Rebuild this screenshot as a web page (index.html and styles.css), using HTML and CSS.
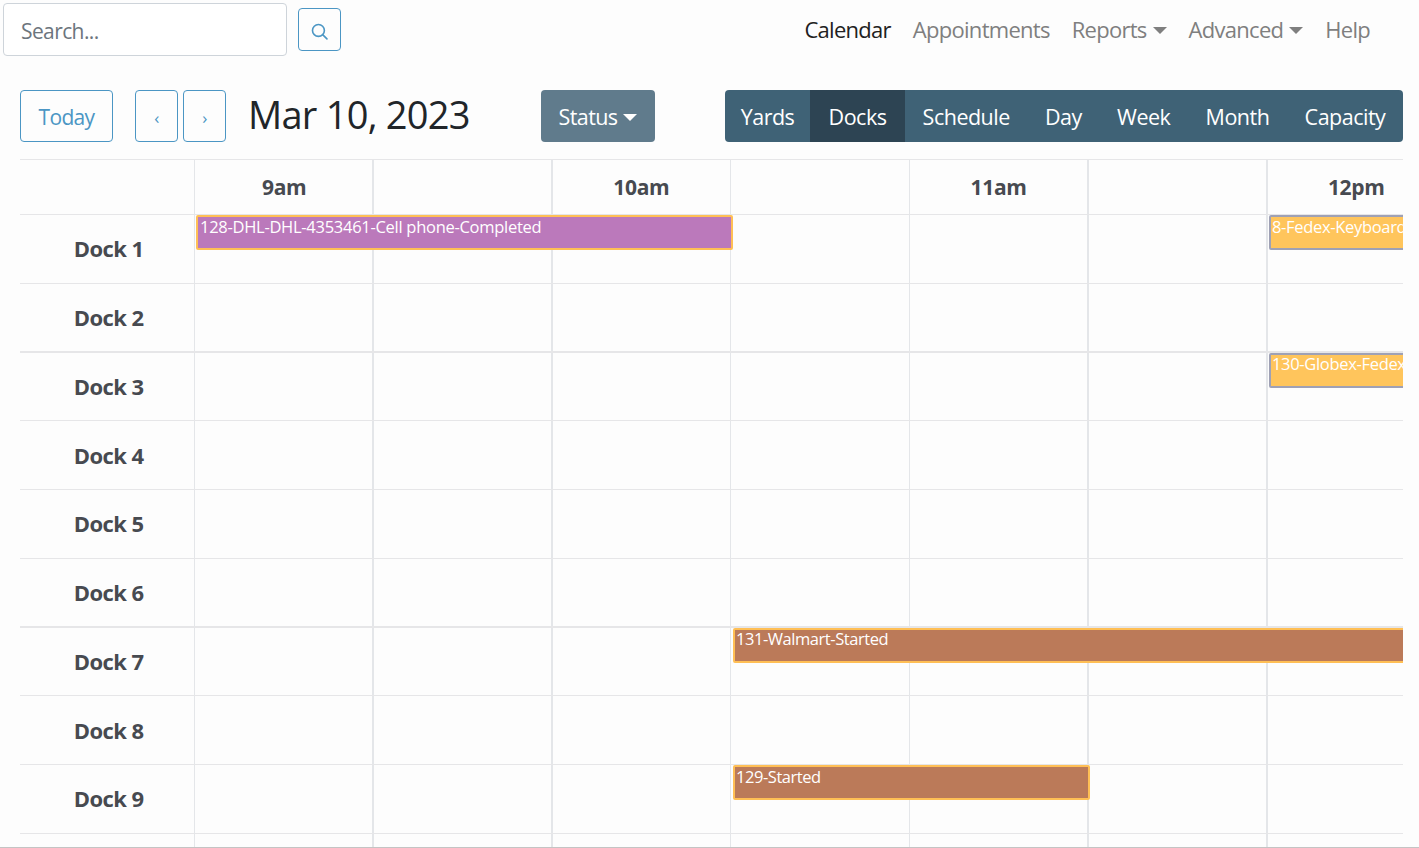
FILE: index.html
```html
<!DOCTYPE html>
<html lang="en">
<head>
<meta charset="utf-8">
<title>Calendar</title>
<link rel="stylesheet" href="styles.css">
</head>
<body>
<div class="page">
  <header class="topbar">
    <input class="search-input" type="text" placeholder="Search...">
    <button class="search-btn" type="button" aria-label="Search">
      <svg width="17" height="17" viewBox="0 0 16 16" fill="none" stroke="#4b96c4" stroke-width="1.5"><circle cx="7" cy="7" r="5.6"/><path d="M11.2 11.2l3.8 3.8" stroke-linecap="round"/></svg>
    </button>
    <nav class="nav">
      <a class="nav-link active">Calendar</a>
      <a class="nav-link">Appointments</a>
      <a class="nav-link caret-link">Reports</a>
      <a class="nav-link caret-link">Advanced</a>
      <a class="nav-link">Help</a>
    </nav>
  </header>

  <section class="toolbar">
    <button class="btn-outline today" type="button">Today</button>
    <div class="pager">
      <button class="btn-outline arrow" type="button">‹</button>
      <button class="btn-outline arrow" type="button">›</button>
    </div>
    <h2 class="title">Mar 10, 2023</h2>
    <button class="status caret-link" type="button">Status</button>
    <div class="views">
      <button class="view v-yards" type="button">Yards</button>
      <button class="view v-docks current" type="button">Docks</button>
      <button class="view" type="button">Schedule</button>
      <button class="view" type="button">Day</button>
      <button class="view" type="button">Week</button>
      <button class="view" type="button">Month</button>
      <button class="view" type="button">Capacity</button>
    </div>
  </section>

  <section class="calendar">
    <div class="row head">
      <div class="label"></div>
      <div class="cell hour">9am</div><div class="cell thick"></div>
      <div class="cell thick hour">10am</div><div class="cell"></div>
      <div class="cell hour">11am</div><div class="cell thick"></div>
      <div class="cell thick hour">12pm</div>
    </div>
    <div class="row">
      <div class="label">Dock 1</div>
      <div class="cell"></div><div class="cell thick"></div><div class="cell thick"></div><div class="cell"></div><div class="cell"></div><div class="cell thick"></div><div class="cell thick"></div>
      <div class="event purple" style="left:176px;width:537px">128-DHL-DHL-4353461-Cell phone-Completed</div>
      <div class="event amber" style="left:1249px;width:300px">8-Fedex-Keyboard</div>
    </div>
    <div class="row">
      <div class="label">Dock 2</div>
      <div class="cell"></div><div class="cell thick"></div><div class="cell thick"></div><div class="cell"></div><div class="cell"></div><div class="cell thick"></div><div class="cell thick"></div>
    </div>
    <div class="row heavy">
      <div class="label">Dock 3</div>
      <div class="cell"></div><div class="cell thick"></div><div class="cell thick"></div><div class="cell"></div><div class="cell"></div><div class="cell thick"></div><div class="cell thick"></div>
      <div class="event amber" style="left:1249px;width:300px">130-Globex-Fedex</div>
    </div>
    <div class="row">
      <div class="label">Dock 4</div>
      <div class="cell"></div><div class="cell thick"></div><div class="cell thick"></div><div class="cell"></div><div class="cell"></div><div class="cell thick"></div><div class="cell thick"></div>
    </div>
    <div class="row">
      <div class="label">Dock 5</div>
      <div class="cell"></div><div class="cell thick"></div><div class="cell thick"></div><div class="cell"></div><div class="cell"></div><div class="cell thick"></div><div class="cell thick"></div>
    </div>
    <div class="row">
      <div class="label">Dock 6</div>
      <div class="cell"></div><div class="cell thick"></div><div class="cell thick"></div><div class="cell"></div><div class="cell"></div><div class="cell thick"></div><div class="cell thick"></div>
    </div>
    <div class="row heavy">
      <div class="label">Dock 7</div>
      <div class="cell"></div><div class="cell thick"></div><div class="cell thick"></div><div class="cell"></div><div class="cell"></div><div class="cell thick"></div><div class="cell thick"></div>
      <div class="event brown" style="left:713px;width:800px">131-Walmart-Started</div>
    </div>
    <div class="row">
      <div class="label">Dock 8</div>
      <div class="cell"></div><div class="cell thick"></div><div class="cell thick"></div><div class="cell"></div><div class="cell"></div><div class="cell thick"></div><div class="cell thick"></div>
    </div>
    <div class="row">
      <div class="label">Dock 9</div>
      <div class="cell"></div><div class="cell thick"></div><div class="cell thick"></div><div class="cell"></div><div class="cell"></div><div class="cell thick"></div><div class="cell thick"></div>
      <div class="event brown" style="left:713px;width:357px">129-Started</div>
    </div>
    <div class="row">
      <div class="label"></div>
      <div class="cell"></div><div class="cell thick"></div><div class="cell thick"></div><div class="cell"></div><div class="cell"></div><div class="cell thick"></div><div class="cell thick"></div>
    </div>
  </section>
</div>
</body>
</html>
```
FILE: styles.css
```css
* { box-sizing: border-box; }
html, body { margin: 0; padding: 0; height: 100%; overflow: hidden; }
body {
  background: #fdfdfd;
  font-family: "Open Sans", "Noto Sans", sans-serif;
  color: #212529;
}
button { font-family: inherit; cursor: pointer; }
.page {
  height: 848px;
  overflow: hidden;
  border-bottom: 1px solid #c4c4c4;
}
.topbar {
  display: flex;
  align-items: flex-start;
  height: 90px;
  padding: 3px 49px 0 3px;
}
.search-input {
  width: 284px;
  height: 53px;
  padding: 2px 17px 0;
  border: 1px solid #ced4da;
  border-radius: 4px;
  background: #fff;
  font: 21px "Open Sans", sans-serif;
  letter-spacing: -0.6px;
  color: #495057;
}
.search-input::placeholder { color: #6c757d; opacity: 1; }
.search-btn {
  width: 43px;
  height: 43px;
  margin: 5px 0 0 11px;
  padding: 4px 0 0;
  border: 1px solid #4b96c4;
  border-radius: 4px;
  background: transparent;
  display: flex;
  align-items: center;
  justify-content: center;
}
.nav {
  margin-left: auto;
  display: flex;
  gap: 22px;
  padding-top: 11px;
  font-size: 22px;
  line-height: 30px;
  letter-spacing: -0.72px;
}
.nav-link { color: #7f7f7f; }
.nav-link.active { color: #212121; }
.caret-link::after {
  content: "";
  display: inline-block;
  margin-left: 6px;
  vertical-align: 4px;
  border-top: 7px solid currentColor;
  border-left: 7px solid transparent;
  border-right: 7px solid transparent;
}
.toolbar {
  display: flex;
  align-items: stretch;
  height: 52px;
  margin: 0 16px 0 20px;
}
.btn-outline {
  border: 1px solid #4b96c4;
  border-radius: 4px;
  background: transparent;
  color: #4b96c4;
  padding: 1px 0 0;
  font-size: 21px;
  letter-spacing: -0.65px;
}
.today { width: 93px; }
.pager { display: flex; gap: 5px; margin-left: 22px; }
.arrow { width: 43px; font-size: 17px; padding-top: 3px; }
.title {
  margin: 0 0 0 22px;
  width: 293px;
  font-size: 38px;
  line-height: 49px;
  font-weight: 400;
  letter-spacing: -0.75px;
  color: #212529;
}
.status {
  width: 114px;
  border: 0;
  border-radius: 4px;
  background: #607b8c;
  color: #fff;
  padding: 1px 0 0;
  font-size: 21.5px;
  letter-spacing: -0.6px;
}
.views {
  display: flex;
  margin-left: 70px;
  flex: 1;
  background: #3f6276;
  border-radius: 4px;
  overflow: hidden;
}
.view {
  flex: auto;
  border: 0;
  padding: 1px 0 0;
  background: transparent;
  color: #fff;
  font-size: 21.5px;
  letter-spacing: -0.5px;
}
.view.current { background: #2d4453; }
.v-yards { flex: 0 0 85px; }
.v-docks { flex: 0 0 95px; }
.calendar {
  position: relative;
  margin: 17px 16px 0 20px;
  overflow: hidden;
  height: 700px;
}
.row {
  position: relative;
  display: grid;
  grid-template-columns: 174.4px repeat(7, 178.6px);
  height: 68.8px;
  border-top: 1px solid #e6e6e8;
}
.row.heavy {
  border-top-width: 2px;
  margin-top: -1px;
  height: 69.6px;
}
.row.heavy .event { line-height: 18px; }
.row.head { height: 55px; }
.label {
  display: flex;
  align-items: center;
  justify-content: center;
  padding: 0 0 1px 3px;
  font-size: 22px;
  font-weight: 700;
  letter-spacing: -0.55px;
  color: #474a50;
}
.cell { border-left: 1px solid #e4e6e9; }
.cell.thick { border-left-width: 2px; }
.cell.thick:nth-child(3), .cell.thick:nth-child(4) { margin-left: -1px; }
.hour {
  display: flex;
  align-items: center;
  justify-content: center;
  font-size: 21px;
  font-weight: 700;
  letter-spacing: -0.3px;
  color: #474a50;
}
.event {
  position: absolute;
  top: 0;
  height: 35px;
  padding: 0 0 0 1px;
  border: 2px solid #ffbf55;
  border-radius: 2px;
  font-size: 16.5px;
  line-height: 20px;
  letter-spacing: -0.32px;
  color: #fff;
  white-space: nowrap;
  overflow: hidden;
}
.purple { background: #bb79bb; padding-left: 2px; letter-spacing: -0.28px; }
.brown { background: #bb7a59; letter-spacing: -0.45px; }
.amber { background: #ffc55c; border-color: #9fa1b5; }
```
